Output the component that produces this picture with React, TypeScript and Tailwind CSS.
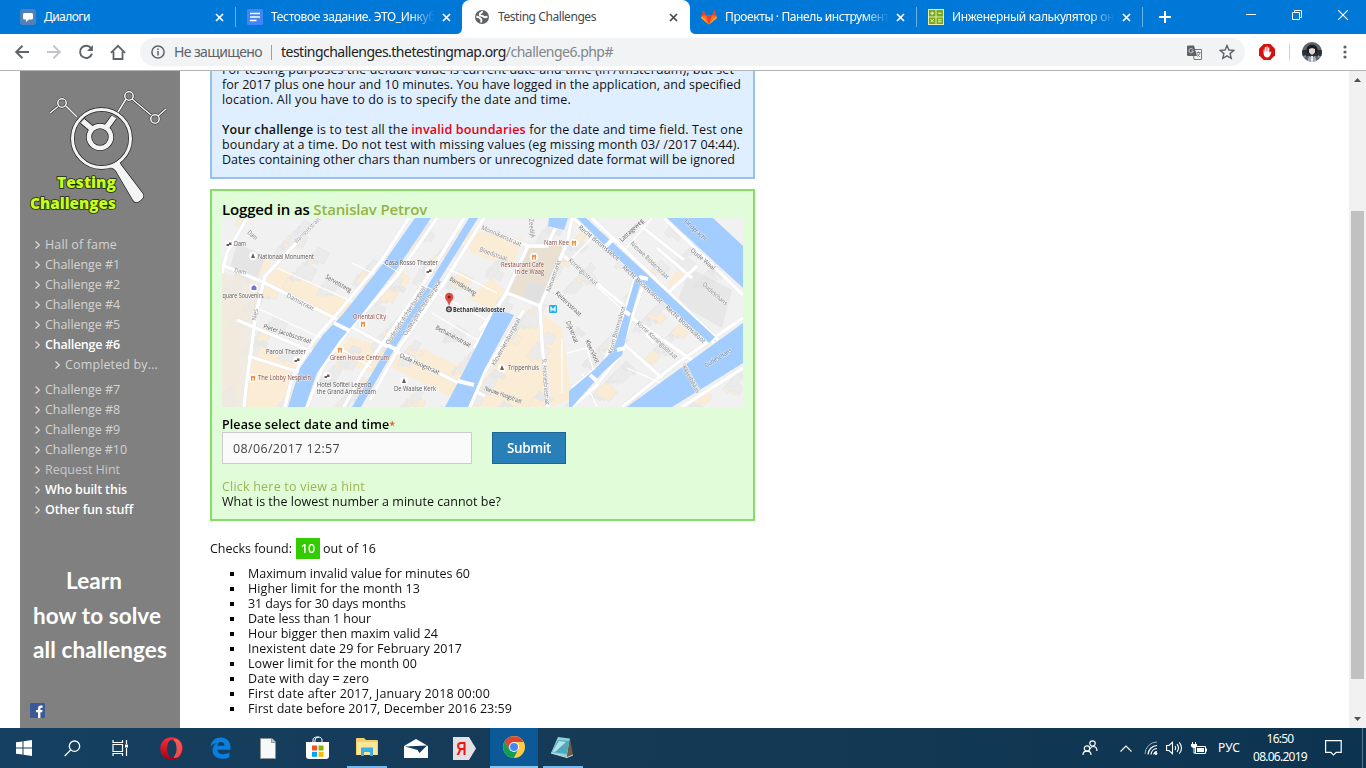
import { useLayoutEffect, useRef, type ReactNode } from "react";

/* A single line of text whose tracking is measured so that it spans the given width. */
function Fit({ w, className = "", children }: { w: number; className?: string; children: ReactNode }) {
  const ref = useRef<HTMLSpanElement>(null);
  useLayoutEffect(() => {
    const el = ref.current;
    if (!el) return;
    el.style.letterSpacing = "0px";
    const natural = el.getBoundingClientRect().width;
    const n = el.textContent?.length || 1;
    el.style.letterSpacing = `${(w - natural) / n}px`;
  }, [w]);
  return (
    <span ref={ref} className={"inline-block whitespace-pre " + className}>
      {children}
    </span>
  );
}

function Close({ className }: { className: string }) {
  return (
    <svg width="9" height="9" viewBox="0 0 9 9" className={className}>
      <path d="M1 1L8 8M8 1L1 8" stroke="currentColor" strokeWidth="1.7" />
    </svg>
  );
}

function TabStrip() {
  return (
    <div className="flex h-[34px] bg-[#0078d7] text-[12px] text-white">
      <div className="flex h-full w-[235px] items-center pl-5">
        <svg width="16" height="16" viewBox="0 0 16 16">
          <rect width="16" height="16" rx="3" fill="#5181b8" />
          <path d="M4.500 4h7Q13 4 13 5.500v3.500q0 1.500-1.500 1.500H9l-3 2.500V10.500H4.500Q3 10.500 3 9V5.500Q3 4 4.500 4z" fill="#fff" />
        </svg>
        <Fit w={46} className="ml-2">Диалоги</Fit>
        <Close className="ml-auto mr-[11px]" />
      </div>
      <div className="mt-[7px] h-5 w-px bg-[#6cb0e8]" />
      <div className="flex h-full w-[226px] items-center pl-[11px]">
        <svg width="16" height="16" viewBox="0 0 16 16">
          <rect width="16" height="16" rx="1.500" fill="#4285f4" />
          <path d="M3 4.500h10M3 8h10M3 11.500h6.500" stroke="#fff" strokeWidth="1.700" />
        </svg>
        <div className="ml-2 w-[164px] overflow-hidden whitespace-nowrap [mask-image:linear-gradient(to_right,black_85%,transparent)]">
          <Fit w={164}>Тестовое задание. ЭТО_Инкуб</Fit>
        </div>
        <Close className="ml-auto mr-[11px]" />
      </div>
      <div className="relative flex h-full w-[228px] items-center rounded-t-[8px] bg-white pl-3 text-[#45494d]">
        <svg className="absolute -left-[6px] bottom-0" width="6" height="6"><path d="M6 0v6H0Q6 6 6 0" fill="#fff" /></svg>
        <svg className="absolute -right-[6px] bottom-0" width="6" height="6"><path d="M0 0v6h6Q0 6 0 0" fill="#fff" /></svg>
        <svg width="16" height="16" viewBox="0 0 16 16">
          <circle cx="8" cy="8" r="7" fill="#5f6368" />
          <path d="M8.800 2.300C7.500 2.800 8.200 3.700 7 4 5.600 4.400 5.500 5.500 6 6.400 6.800 7.200 8.800 6.600 9.600 7.600 10.300 8.500 11.500 8.400 13.500 7.700M2.300 7.500L5 8.300 7.200 10.200C7.900 11.200 7 12.200 7.100 13.500" fill="none" stroke="#fff" strokeWidth="1.900" />
        </svg>
        <Fit w={98} className="ml-2">Testing Challenges</Fit>
        <Close className="ml-auto mr-3" />
      </div>
      <div className="flex h-full w-[226px] items-center pl-[10px]">
        <svg width="18" height="16" viewBox="0 0 18 16">
          <path d="M3.500 1L6 6.500H12L14.500 1 17 9 9 15.500 1 9z" fill="#fc6d26" />
          <path d="M3.500 1L6 6.500H1.700zM14.500 1L12 6.500h4.300zM6 6.500h6L9 15.500z" fill="#e24329" />
          <path d="M1.700 7.500L1 9l8 6.500-4.500-6zM16.300 7.500L17 9l-8 6.500 4.500-6z" fill="#fca326" />
        </svg>
        <div className="ml-[7px] w-[164px] overflow-hidden [mask-image:linear-gradient(to_right,black_85%,transparent)]">
          <Fit w={164}>Проекты · Панель инструмент</Fit>
        </div>
        <Close className="ml-auto mr-[11px]" />
      </div>
      <div className="mt-[7px] h-5 w-px bg-[#6cb0e8]" />
      <div className="flex h-full w-[225px] items-center pl-[11px]">
        <svg width="16" height="16" viewBox="0 0 16 16">
          <rect width="16" height="16" fill="#e5efb4" />
          <path d="M1 1h6.500v6.500H1zM8.500 1H15v6.500H8.500zM1 8.500h6.500V15H1zM8.500 8.500H15V15H8.500z" fill="#79a81a" />
          <path d="M2.500 4.200h3.500M4.200 2.500v3.500M10 4.200h3.500M2.700 10.200l3 3M5.700 10.200l-3 3M10 10.800h3.500M10 12.800h3.500" stroke="#f1f6cf" />
        </svg>
        <div className="ml-2 w-[162px] overflow-hidden [mask-image:linear-gradient(to_right,black_85%,transparent)]">
          <Fit w={162}>Инженерный калькулятор он</Fit>
        </div>
        <Close className="ml-auto mr-[11px]" />
      </div>
      <div className="mt-[7px] h-5 w-px bg-[#6cb0e8]" />
      <div className="flex h-full w-[44px] items-center justify-center">
        <svg width="12" height="12"><path d="M0 6h12M6 0v12" stroke="#fff" strokeWidth="2" /></svg>
      </div>
      <div className="ml-auto flex h-[29px] w-[138px] items-center">
        <div className="flex w-[46px] justify-center"><svg width="10" height="10"><path d="M0 4.500h10" stroke="#fff" /></svg></div>
        <div className="flex w-[46px] justify-center">
          <svg width="10" height="10" fill="none" stroke="#fff"><path d="M.5 2.500h7v7h-7zM2.500 2.500v-2h7v7h-2" /></svg>
        </div>
        <div className="flex w-[46px] justify-center"><svg width="10" height="10"><path d="M0 0l10 10M10 0L0 10" stroke="#fff" strokeWidth="1.100" /></svg></div>
      </div>
    </div>
  );
}

function Toolbar() {
  return (
    <div className="flex h-[37px] items-center border-b border-[#b3b3b3] bg-white pl-[14px] text-[#5f6368]">
      <svg width="16" height="16" viewBox="0 0 16 16" fill="none" stroke="#5f6368" strokeWidth="1.900"><path d="M15 8H2.500M8.500 1.800L2.200 8l6.300 6.200" /></svg>
      <svg className="ml-4" width="16" height="16" viewBox="0 0 16 16" fill="none" stroke="#c2c4c7" strokeWidth="1.900"><path d="M1 8h12.500M7.500 1.800L13.800 8l-6.300 6.200" /></svg>
      <svg className="ml-4" width="16" height="16" viewBox="0 0 16 16"><path d="M13.400 4.700A6.100 6.100 0 1 0 14 9.600" fill="none" stroke="#5f6368" strokeWidth="1.900" /><path d="M14.900 1v6H9z" fill="#5f6368" /></svg>
      <svg className="ml-4" width="16" height="16" viewBox="0 0 16 16" fill="none" stroke="#5f6368" strokeWidth="1.800"><path d="M.9 8.800L8 1.800l7.100 7M3.500 7.500V15h9V7.500" /></svg>
      <div className="ml-[14px] flex h-7 w-[1105px] items-center rounded-full bg-[#f1f3f4] pl-[11px]">
        <svg width="14" height="14" viewBox="0 0 14 14"><circle cx="7" cy="7" r="6.100" fill="none" stroke="#5f6368" strokeWidth="1.500" /><path d="M7 6v4.500M7 3.400v1.500" stroke="#5f6368" strokeWidth="1.500" /></svg>
        <Fit w={88} className="-mt-px ml-[9px] text-[14px]">Не защищено</Fit>
        <div className="ml-[9px] h-[15px] w-px bg-[#9aa0a6]" />
        <Fit w={332} className="-mt-px ml-[9px] text-[14px] text-[#80868b]"><span className="text-[#202124]">testingchallenges.thetestingmap.org</span>/challenge6.php#</Fit>
        <svg className="ml-auto" width="15" height="15" viewBox="0 0 15 15">
          <path d="M6 4.500h8.500v10H7z" fill="#f1f3f4" stroke="#777b80" />
          <path d="M0 1.500Q0 .5 1 .5h6l3 10.500H1q-1 0-1-1z" fill="#5f6368" />
          <path d="M6 4.500A2.200 2.200 0 1 0 6.300 6H4.500" fill="none" stroke="#d5d7da" strokeWidth=".9" />
          <path d="M9.500 7.500h4M11.500 6.500v1M13 7.500c-.5 2-1.500 3-3 4M10.500 8.500c.5 1.500 1.300 2.500 2.500 3.500" fill="none" stroke="#777b80" strokeWidth=".9" />
        </svg>
        <svg className="ml-[17px] mr-[10px]" width="16" height="16" viewBox="0 0 16 16"><path d="M8 1.500l1.900 4.500 4.900.4-3.700 3.200 1.100 4.800L8 11.900l-4.200 2.500 1.100-4.800L1.200 6.400 6.100 6z" fill="none" stroke="#5f6368" strokeWidth="1.400" /></svg>
      </div>
      <svg className="ml-[14px]" width="16" height="16" viewBox="0 0 16 16">
        <path d="M4.700 0h6.600L16 4.700v6.600L11.300 16H4.700L0 11.300V4.700z" fill="#d81010" />
        <path d="M4.600 5.500v4.200q.5 3.800 3.600 3.800 2 0 3-2.300l1.200-3.300-1.100-.3-1 1.500V3.500H9.100v4h-.4V2.500H7.400v5H7V3.300H5.800v4.500h-.4V5.500z" fill="#fff" />
      </svg>
      <div className="ml-[14px] h-4 w-px bg-[#cfd1d4]" />
      <svg className="ml-3" width="20" height="20" viewBox="0 0 20 20">
        <defs><clipPath id="avatar"><circle cx="10" cy="10" r="10" /></clipPath></defs>
        <g clipPath="url(#avatar)">
          <path d="M0 0h20v20H0z" fill="#5d646c" /><path d="M0 8h20v6H0z" fill="#2b3036" />
          <path d="M4.500 8c0-7 11-7 11 0l-1 3h-9z" fill="#191b20" />
          <path d="M7 7l3-1 3 1v3.500L10 13l-3-2.500z" fill="#e7d8cf" />
          <path d="M5 20l2-6 3 2 3-2 2 6z" fill="#a2abbd" /><path d="M9 14h2v6H9z" fill="#e4e7ee" />
          <path d="M1 14l3-1-1 3zM16 13l3 2-3 1z" fill="#8b939d" />
        </g>
      </svg>
      <svg className="ml-[21px]" width="4" height="14" fill="#5f6368"><circle cx="2" cy="2" r="1.600" /><circle cx="2" cy="7" r="1.600" /><circle cx="2" cy="12" r="1.600" /></svg>
    </div>
  );
}

const menu: { t: string; w: number; c: string; row: string }[] = [
  { t: "Hall of fame", w: 72, c: "text-[#d3d3d3]", row: "h-5" },
  { t: "Challenge #1", w: 75, c: "text-[#d3d3d3]", row: "h-5" },
  { t: "Challenge #2", w: 75, c: "text-[#d3d3d3]", row: "h-5" },
  { t: "Challenge #4", w: 75, c: "text-[#d3d3d3]", row: "h-5" },
  { t: "Challenge #5", w: 75, c: "text-[#d3d3d3]", row: "h-5" },
  { t: "Challenge #6", w: 75, c: "text-white font-semibold", row: "h-5" },
  { t: "Completed by...", w: 93, c: "text-[#d3d3d3]", row: "h-5 pl-5 mb-[5px]" },
  { t: "Challenge #7", w: 75, c: "text-[#d3d3d3]", row: "h-5" },
  { t: "Challenge #8", w: 75, c: "text-[#d3d3d3]", row: "h-5" },
  { t: "Challenge #9", w: 75, c: "text-[#d3d3d3]", row: "h-5" },
  { t: "Challenge #10", w: 82, c: "text-[#d3d3d3]", row: "h-5" },
  { t: "Request Hint", w: 75, c: "text-[#c8c8c8]", row: "h-5" },
  { t: "Who built this", w: 82, c: "text-white font-semibold", row: "h-5" },
  { t: "Other fun stuff", w: 88, c: "text-white font-semibold", row: "h-5" },
];

function Logo() {
  return (
    <svg width="160" height="164" viewBox="0 0 160 164">
      {[
        { s: "#222", o: 1.4 },
        { s: "#f4f4f4", o: 0 },
      ].map(({ s, o }) => (
        <g key={s} fill="none" stroke={s}>
          <g strokeWidth={1.6 + o * 0.6}>
            <path d="M30 42L38 35.500M46 35L57 46M98 41L106 28M112 28L131 44M138 45L146 38" />
            <circle cx="42" cy="32" r="4.200" /><circle cx="109" cy="25" r="4.200" /><circle cx="135" cy="48" r="4.200" />
          </g>
          <circle cx="81.500" cy="67.500" r="29" strokeWidth={3 + o} />
          <circle cx="80" cy="66" r="11" strokeWidth={4.500 + o} />
          <path d="M72 58L62.500 50M86 57L94 46" strokeWidth={5.500 + o} />
          <path d="M89 96L98 90Q100 91 101 94L123 123Q125 127 118 131 115 132 113 129L96 100Q94 97 89 96Z" fill={s} strokeWidth={o} />
        </g>
      ))}
      <g fontFamily="'Open Sans', sans-serif" fontWeight="800" fontSize="15" fill="#c5ff1c" stroke="#202810" strokeWidth="1.600" paintOrder="stroke">
        <text x="37" y="116.500" textLength="59" lengthAdjust="spacingAndGlyphs">Testing</text>
        <text x="10" y="137.500" textLength="86" lengthAdjust="spacingAndGlyphs">Challenges</text>
      </g>
    </svg>
  );
}

function Sidebar() {
  return (
    <aside className="ml-5 flex h-full w-40 shrink-0 flex-col bg-[#808080]">
      <Logo />
      <ul className="text-[12.5px] leading-5 [font-family:'Open_Sans',sans-serif]">
        {menu.map((m) => (
          <li key={m.t} className={"flex items-center " + m.row}>
            <svg className="ml-[15px] mr-[5px]" width="5" height="8"><path d="M.5.500L4.500 4L.5 7.500" fill="none" stroke="#e0e0e0" strokeWidth="1.200" /></svg>
            <Fit w={m.w} className={m.c}>{m.t}</Fit>
          </li>
        ))}
      </ul>
      <div className="mt-11 flex flex-col text-[22.5px] font-bold leading-[34.500px] text-white [font-family:Lato,sans-serif]">
        <div className="pl-[46px]"><Fit w={56}>Learn</Fit></div>
        <div className="pl-[13px]"><Fit w={128}>how to solve</Fit></div>
        <div className="pl-[13px]"><Fit w={134}>all challenges</Fit></div>
      </div>
      <svg className="mb-[10px] ml-[10px] mt-auto" width="15" height="15" viewBox="0 0 15 15">
        <rect width="15" height="15" rx="1" fill="#3b5998" />
        <path d="M8 15V9.300H6V7h2V5.400Q8 2.500 10.800 2.500h1.800v2.200h-1.200q-1 0-1 1V7h2.200l-.4 2.300h-1.800V15z" fill="#fff" />
      </svg>
    </aside>
  );
}

const streets = [
  "M25 0L5 35 0 55", "M0 47L43 65 128 108 168 130 246 170 263 178", "M98 0L43 58 34 95 24 170 22 189", "M187 0L160 42 116 95 92 122 70 160 63 189",
  "M215 0L175 58 128 110 100 150 85 189", "M242 0L205 60 170 112 140 155 122 189", "M262 0L220 68 178 128 148 182", "M338 0L325 28 306 28 284 75 252 130",
  "M350 0L345 25 318 88 285 75 258 112", "M318 88L320 125 326 189", "M302 92L262 155 248 189", "M306 28L258 8", "M351 0L405 48 460 92 492 125",
  "M370 0L430 58 496 122", "M342 38L400 86 432 125", "M423 62L408 105 396 140 374 168 350 189", "M413 60L400 105 382 144 350 170", "M442 0L521 77",
  "M521 100L455 145 400 189", "M521 150L460 189", "M475 48L446 75M415 5L462 42M435 30L470 60", "M395 120L440 160M410 100L474 145", "M15 102L93 135M26 138L80 155",
];
const houses = Array.from({ length: 250 }, (_, i) => {
  const a = (i * 83 + 17) % 537;
  const b = (i * 47 + (i % 7) * 19) % 199;
  return { x: a, y: b, w: 7 + (i % 4) * 3, h: 5 + (i % 3) * 4, f: i % 5 === 0 ? "#faebd4" : i % 3 === 0 ? "#e7e8ea" : "#ebebec", r: a > 340 ? 43 : 28 };
});
const labels: { t: string; x: number; y: number; w: number; r?: number; c?: string }[] = [
  { t: "Dam", x: 12, y: 28, w: 12 }, { t: "Dam", x: 25, y: 15, w: 11, r: 43, c: "#777" }, { t: "Dam", x: 12, y: 54, w: 12, r: 13, c: "#888" },
  { t: "Nationaal Monument", x: 36, y: 41, w: 56 }, { t: "quare Souvenirs", x: 0.5, y: 80, w: 41 },
  { t: "Warmoesstraat", x: 75, y: 26, w: 34, r: -46, c: "#999" }, { t: "Servetsteeg", x: 103, y: 60, w: 29, r: 30 },
  { t: "Damstraat", x: 64, y: 79, w: 30, r: 27, c: "#888" }, { t: "Casa Rosso Theater", x: 163, y: 47, w: 53 },
  { t: "Oriental City", x: 131, y: 101, w: 33, c: "#8c4b42" }, { t: "Pieter Jacobszstraat", x: 41, y: 110, w: 50, r: 18 },
  { t: "Parool Theater", x: 44, y: 136, w: 40 }, { t: "Green House Centrum", x: 108, y: 142, w: 59, c: "#8c4b42" },
  { t: "The Lobby Nesplein", x: 36, y: 162, w: 53, c: "#8c4b42" }, { t: "Hotel Sofitel Legend", x: 95, y: 169, w: 54 },
  { t: "the Grand Amsterdam", x: 95, y: 176, w: 59 }, { t: "De Waalse Kerk", x: 172, y: 173, w: 42 },
  { t: "Oude Hoogstraat", x: 177, y: 139, w: 43, r: 24 }, { t: "Bethaniënstraat", x: 213, y: 111, w: 39, r: 28 },
  { t: "Barndesteeg", x: 227, y: 62, w: 30, r: 31 }, { t: "Oudezijds Achterburgwal", x: 167, y: 127, w: 68, r: -57, c: "#888" },
  { t: "Oudezijds Achterburgwal", x: 184, y: 118, w: 65, r: -57, c: "#888" },
  { t: "Monnikenstraat", x: 259, y: 11, w: 43, r: 24, c: "#888" }, { t: "Bloedstraat", x: 257, y: 33, w: 29, r: 20, c: "#888" },
  { t: "Nam Kee", x: 322, y: 27, w: 25, c: "#8c4b42" }, { t: "Restaurant Café", x: 279, y: 49, w: 43, c: "#8c4b42" }, { t: "in de Waag", x: 293, y: 56, w: 29, c: "#8c4b42" },
  { t: "Nieuwmarkt", x: 328, y: 74, w: 33, r: -70, c: "#888" }, { t: "Koningsstraat", x: 346, y: 43, w: 37, r: 42, c: "#888" },
  { t: "Recht Boomssloot", x: 356, y: 10, w: 51, r: 40, c: "#777" }, { t: "Recht Boomssloot", x: 400, y: 50, w: 52, r: 43, c: "#777" }, { t: "Recht Boomssloot", x: 443, y: 90, w: 52, r: 43, c: "#777" },
  { t: "Keizersstraat", x: 333, y: 76, w: 33, r: 43 }, { t: "Dijkstraat", x: 344, y: 104, w: 23, r: 68 }, { t: "Kleersloot", x: 363, y: 123, w: 25, r: 64 },
  { t: "Krom Boomssloot", x: 390, y: 136, w: 49, r: -74, c: "#888" }, { t: "Korte Koningsstraat", x: 414, y: 106, w: 53, r: 42, c: "#888" },
  { t: "Lastageweg", x: 400, y: 24, w: 30, r: -43 }, { t: "Nieuwe Ridderstraat", x: 408, y: 26, w: 51, r: 44, c: "#888" },
  { t: "Oude Waal", x: 468, y: 33, w: 30, r: 40, c: "#777" }, { t: "Oudeschans", x: 480, y: 67, w: 31, r: 42, c: "#888" }, { t: "Oudeschans", x: 484, y: 150, w: 31, r: -32, c: "#5277a2" },
  { t: "landgracht", x: 462, y: 4, w: 28, r: 43, c: "#5277a2" }, { t: "Trippenhuis", x: 286, y: 152, w: 31 }, { t: "Nieuwe Hoogstraat", x: 262, y: 172, w: 39, r: 20 },
  { t: "Kloveniersburgwal", x: 273, y: 148, w: 53, r: -61, c: "#888" }, { t: "St. Antoniesbreestraat", x: 320, y: 141, w: 46, r: 86, c: "#888" },
  { t: "Nes", x: 34, y: 103, w: 12, r: -80, c: "#888" }, { t: "Kikkerbilsluis", x: 460, y: 149, w: 30, r: 61, c: "#888" }, { t: "Zeedijk", x: 307, y: 1, w: 19, r: 85, c: "#888" },
];

function AreaMap() {
  return (
    <svg width="521" height="189" viewBox="0 0 521 189" className="block">
      <rect width="521" height="189" fill="#f1f1f1" />
      <g className="blur-[0.35px]">
        <g fill="#fbecd5">
          <path d="M43 62L55 48 140 90 118 108zM25 35L50 45 35 62 10 50zM35 125L75 145 62 189 20 189zM128 118L165 132 150 155 110 140zM172 133L260 176 250 189 150 140zM0 60L20 65 18 189 0 189z" />
          <path d="M270 60L285 75 270 92 245 80zM302 92L315 95 326 189 250 189 270 150zM320 95L340 110 350 180 330 189zM462 42L475 48 448 75 446 65zM230 10L300 20 290 50 250 35z" />
          <path d="M200 130L250 155 240 175 190 148zM165 45L190 60 175 78 160 60z" />
        </g>
        {houses.map((h, i) => (
          <path key={i} transform={`translate(${h.x} ${h.y}) rotate(${h.r})`} d={`M0 0H${h.w}V${h.h}H${h.w / 2}V${h.h + 3}H0Z`} fill={h.f} stroke="#dfdfe0" strokeWidth=".35" />
        ))}
        <path d="M0 55L40 65 34 90 24 160 22 189H0V85z" fill="#efe9df" opacity=".75" />
        <path d="M308 28H340L338 45 318 88 284 75z" fill="#e9e0d2" />
        <path d="M306 64L330 68 318 88 300 82z" fill="#e0e0e1" />
        <path d="M15 25L43 38 35 63 7 53z" fill="#e5e5e5" />
        <path d="M468 50L510 72 500 110 455 85z" fill="#e3e3e4" opacity=".7" />
        <g fill="none" stroke="#e4e4e4" strokeWidth="4.300">{streets.map((d) => <path key={d} d={d} />)}</g>
        <g fill="none" stroke="#fff" strokeWidth="3.400">{streets.map((d) => <path key={d} d={d} />)}</g>
        <g fill="none" stroke="#fff" strokeWidth="1.200"><path d="M55 50L145 90M35 90L110 125M130 45L170 65M215 75L270 105M210 95L260 125M225 50L275 75M110 125L150 150M345 40L420 110M380 10L350 40M430 0L400 35M345 135L365 130 375 165M340 120V175M360 155L375 189M405 150L450 170" /></g>
        <g fill="#a3ccff">
          <path d="M193 0H209L174 52 137 100 118 122 95 155 83 189H66L78 150 101 117 121 96 160 47z" />
          <path d="M247 0H256L213 69 176 125 139 189H130L168 125 205 69z" />
          <path d="M273 91L292 97 263 150 246 189H223L241 155z" />
          <path d="M327 0H346L342 12 326 8z" />
          <path d="M355 0L364 0 426 57 493 119 487 125 418 62 384 29z" />
          <path d="M413 61L419 63 409 98 400 137 381 154 350 189H347V173L372 152 391 132 404 92z" />
          <path d="M445 0H491L521 28V70z" />
          <path d="M521 105V145L450 189H405z" />
        </g>
        <g stroke="#fff" strokeWidth="4" fill="none"><path d="M112 105L128 113M236 163L252 167M165 127L175 132M383 29L391 21M408 97L401 92M417 59L426 61M395 132L403 130M368 157L375 163" /><path d="M157 43L178 55M203 68L213 73" strokeWidth="1" /><path d="M462 145L477 173" stroke="#e3e3e3" strokeWidth="3" /></g>
      </g>
      <g fontFamily="'Open Sans', sans-serif" fontSize="6.300" stroke="#f7f7f7" strokeWidth="1.100" strokeOpacity=".75" paintOrder="stroke" className="blur-[0.2px]">
        {labels.map((l, i) => (
          <text key={i} transform={`translate(${l.x} ${l.y}) rotate(${l.r ?? 0})`} textLength={l.w} lengthAdjust="spacingAndGlyphs" fill={l.c ?? "#5a5654"}>{l.t}</text>
        ))}
        <text x="231" y="94" fontSize="6.500" fontWeight="700" textLength="52" lengthAdjust="spacingAndGlyphs" fill="#333">Bethaniënklooster</text>
      </g>
      <path d="M227 89C227 84 223 82 223 79a4.200 4.200 0 0 1 8.400 0C231.400 82 227.500 84 227 89z" fill="#df4e43" /><circle cx="227.200" cy="79" r="1.500" fill="#7b1e18" />
      <circle cx="227" cy="91.300" r="2.300" fill="#fff" stroke="#444" strokeWidth="1.500" /><circle cx="227" cy="91.300" r=".8" fill="#333" />
      <rect x="327" y="87" width="8" height="8" rx="1" fill="#22b0ed" /><path d="M329 93.500v-4l2 2.500 2-2.500v4" fill="none" stroke="#fff" strokeWidth="1.200" />
      {[[141, 106], [118, 132], [31, 160], [312, 39], [352, 25]].map(([x, y]) => (
        <g key={x}><circle cx={x} cy={y} r="4.200" fill="#fff" /><path d={`M${x - 1.300} ${y - 2.300}v5M${x + 1.300} ${y - 2.300}v5M${x - 2.200} ${y - 1}h4.400`} stroke="#ef8a3a" strokeWidth="1.300" /></g>
      ))}
      {[[31, 38], [182, 163], [280, 150]].map(([x, y]) => (
        <g key={x}><circle cx={x} cy={y} r="4" fill="#fff" opacity=".9" /><path d={`M${x - 2} ${y + 2}L${x} ${y - 3}L${x + 2} ${y + 2}Z`} fill="#6f5a56" /></g>
      ))}
      {[[207, 53], [75, 142], [105, 158], [7, 26]].map(([x, y]) => (
        <g key={x}><circle cx={x} cy={y} r="4" fill="#fff" opacity=".9" /><path d={`M${x - 2.500} ${y}h2.500v2h-2.500zM${x} ${y - 1.500}h2.500v2.500h-2.500z`} fill="#6f5a56" /></g>
      ))}
      <circle cx="32" cy="70" r="4" fill="#fff" /><path d="M29.500 72v-3l2.500-2 2.500 2v3z" fill="#6b78d0" />
    </svg>
  );
}

const checks: [string, number][] = [
  ["Maximum invalid value for minutes 60", 222], ["Higher limit for the month 13", 172], ["31 days for 30 days months", 158], ["Date less than 1 hour", 123],
  ["Hour bigger then maxim valid 24", 190], ["Inexistent date 29 for February 2017", 214], ["Lower limit for the month 00", 169], ["Date with day = zero", 121],
  ["First date after 2017, January 2018 00:00", 242], ["First date before 2017, December 2016 23:59", 264],
];

function Content() {
  return (
    <main className="ml-[30px] flex w-[545px] flex-col text-[12.5px] leading-[15px] text-[#111] [font-family:'Open_Sans',sans-serif]">
      <section className="-mt-[9px] flex h-[117px] shrink-0 flex-col items-start border-x-2 border-b-2 border-[#97c1ea] bg-[#e0efff] px-[10px]">
        <Fit w={512}>For testing purposes the default value is current date and time (in Amsterdam), but set</Fit>
        <Fit w={519}>for 2017 plus one hour and 10 minutes. You have logged in the application, and specified</Fit>
        <Fit w={349} className="mb-[15px]">location. All you have to do is to specify the date and time.</Fit>
        <Fit w={521}><b className="font-semibold">Your challenge</b> is to test all the <b className="font-semibold text-[#e6000f]">invalid boundaries</b> for the date and time field. Test one</Fit>
        <Fit w={518}>boundary at a time. Do not test with missing values (eg missing month 03/ /2017 04:44).</Fit>
        <Fit w={513}>Dates containing other chars than numbers or unrecognized date format will be ignored</Fit>
      </section>
      <section className="mt-[10px] flex h-[332px] shrink-0 flex-col border-2 border-[#86dd68] bg-[#e1fcd8] px-[10px] pt-[9px]">
        <div className="h-[18px] text-[15px] font-semibold leading-[19px] text-black"><Fit w={205}>Logged in as <span className="text-[#96b04a]">Stanislav Petrov</span></Fit></div>
        <AreaMap />
        <div className="mt-[10px] h-[15px] font-semibold text-black"><Fit w={173}>Please select date and time<span className="text-[10px] leading-3 text-[#e05030]">*</span></Fit></div>
        <div className="flex h-8 shrink-0 gap-5">
          <div className="flex w-[250px] items-center border border-[#ccc] bg-[#fafafa] pl-[10px] text-[#444]"><Fit w={107}>08/06/2017 12:57</Fit></div>
          <button className="flex w-[74px] items-center justify-center border border-[#1f6494] bg-[#2980b9] text-[13.500px] font-semibold text-white"><Fit w={44}>Submit</Fit></button>
        </div>
        <div className="mt-[15px] flex flex-col items-start">
          <Fit w={143} className="text-[#9bb553]">Click here to view a hint</Fit>
          <Fit w={279}>What is the lowest number a minute cannot be?</Fit>
        </div>
      </section>
      <div className="mt-[17px] flex h-[21px] shrink-0 items-center">
        <Fit w={82}>Checks found:</Fit>
        <span className="ml-1 flex h-[21px] w-6 items-center justify-center bg-[#33cc00] font-semibold text-white">10</span>
        <Fit w={53} className="ml-[3px]">out of 16</Fit>
      </div>
      <ul className="mt-[7px] pl-5">
        {checks.map(([t, w]) => (
          <li key={t} className="flex h-[15px] items-center"><span className="mr-[14px] size-1 bg-black" /><Fit w={w}>{t}</Fit></li>
        ))}
      </ul>
    </main>
  );
}

function Scrollbar() {
  return (
    <div className="ml-auto flex w-[17px] flex-col items-center bg-[#f1f1f1]">
      <svg width="17" height="17"><path d="M5 11l3.500-4 3.500 4z" fill="#505050" /></svg>
      <div className="mt-[123px] h-[468px] w-[13px] bg-[#c1c1c1]" />
      <svg className="mt-auto" width="17" height="17"><path d="M5 6l3.500 4L12 6z" fill="#505050" /></svg>
    </div>
  );
}

function Slot({ w, children, on = "" }: { w: string; children: ReactNode; on?: string }) {
  return <div className={"flex h-10 shrink-0 items-center justify-center " + w + " " + on}>{children}</div>;
}

function Taskbar() {
  return (
    <footer className="flex h-10 bg-[linear-gradient(to_right,#154061,#153a56_45%,#0c3450)] text-white">
      <Slot w="w-12">
        <svg width="16" height="16" fill="#fff"><path d="M0 2.300L6.500 1.400V7.500H0zM7.500 1.200L16 0V7.500H7.500zM0 8.500H6.500V14.600L0 13.700zM7.500 8.500H16V16L7.500 14.800z" /></svg>
      </Slot>
      <Slot w="w-12">
        <svg width="17" height="17" fill="none" stroke="#fff" strokeWidth="1.300"><circle cx="10.500" cy="6.200" r="5.200" /><path d="M6.800 9.900L.7 16" /></svg>
      </Slot>
      <Slot w="w-12">
        <svg width="17" height="16" fill="none" stroke="#fff"><path d="M1 0v2.500h9.500V0M1 4.500h9.500v7H1zM1 16v-2.500h9.500V16M14.500 0v4M14.500 8v8" strokeWidth="1.200" /><path d="M13 4.500h3v3h-3z" fill="#fff" stroke="none" /></svg>
      </Slot>
      <Slot w="w-[54px]">
        <svg width="23" height="23" viewBox="0 0 23 23"><defs><linearGradient id="op" x2="0" y2="1"><stop stopColor="#fb2d39" /><stop offset="1" stopColor="#a70014" /></linearGradient></defs><circle cx="11.500" cy="11.500" r="11.200" fill="url(#op)" /><path d="M14 2C20 1 22 7 22 11.500S19 22 14 21z" fill="#ff6b68" opacity=".7" /><ellipse cx="11.800" cy="11.500" rx="4.800" ry="8.700" fill="#153e5d" /></svg>
      </Slot>
      <Slot w="w-11">
        <svg width="21" height="22" viewBox="0 0 21 22"><path d="M.5 9.500C1.500 3.500 5.500.5 10.700.5 17 .5 20.500 4.800 20.500 10.500v2.300H7.300c.2 3.200 3.100 4.500 6 4.500 2.300 0 4.200-.6 6-1.700v4.600c-2 1.100-4.400 1.600-7 1.600C6 21.800 2.500 18 2.500 13.300c0-3.200 1.700-5.900 4.700-7.600C4.700 6 2.200 7.500.5 9.500zm7-.7h6.900c0-2.300-1-3.900-3.500-3.900-2 0-3.200 1.700-3.400 3.900z" fill="#0a7fe0" /></svg>
      </Slot>
      <Slot w="w-[52px]"><svg width="16" height="21"><path d="M.5.500H12L15.500 4V20.500H.5z" fill="#f7f8f8" stroke="#8d9499" /><path d="M11.500.5V4.500h4" fill="#c7cccf" stroke="#777" strokeWidth=".7" /></svg></Slot>
      <Slot w="w-[46px]">
        <svg width="23" height="24" viewBox="0 0 23 24"><path d="M0 6h23v14q0 3-3 3H3q-3 0-3-3z" fill="#fff" /><path d="M7 7V4q0-3 4.500-3T16 4v3M9 6V4q0-3 4-3" fill="none" stroke="#fff" /><path d="M6 9.500h5v5H6z" fill="#f05022" /><path d="M12.500 9.500h5v5h-5z" fill="#7fba00" /><path d="M6 15.800h5v5H6z" fill="#00a4ef" /><path d="M12.500 15.800h5v5h-5z" fill="#ffb900" /></svg>
      </Slot>
      <div className="ml-[7px]" />
      <Slot w="w-10" on="border-b-2 border-[#76b9ed]">
        <svg width="22" height="20" viewBox="0 0 22 20"><path d="M0 2Q0 1 1 1h7l2 2h11q1 0 1 1v14H0z" fill="#f2cf67" /><path d="M1 5h20v13H1z" fill="#fbe69a" /><path d="M5 19v-8q0-.5.500-.5h11q.5 0 .5.500v8h-3v-4H8v4z" fill="#39b0e5" /></svg>
      </Slot>
      <Slot w="w-[58px]"><svg width="24" height="19"><path d="M0 7L12 0 24 7V19H0z" fill="#fff" /><path d="M1 7.500L23 6.500 15.500 14 13.500 11z" fill="#153b58" /></svg></Slot>
      <Slot w="w-[40px]"><svg className="-ml-px" width="23" height="23"><path d="M0 0H16L23 11.500 16 23H0z" fill="#e2e2e4" /><text x="8.500" y="18" textAnchor="middle" fontFamily="Liberation Sans, sans-serif" fontWeight="700" fontSize="18" textLength="10" lengthAdjust="spacingAndGlyphs" fill="#f01515">Я</text></svg></Slot>
      <div className="ml-[5px]" />
      <Slot w="w-12" on="border-b-2 border-[#8bc5ef] bg-[#0c5997]">
        <svg width="22" height="22" viewBox="0 0 22 22"><circle cx="11" cy="11" r="11" fill="#fc4" /><path d="M1.400 5.600A11 11 0 0 1 20.600 6H11L6.700 13.500z" fill="#db4437" /><path d="M1.500 5.500L6.700 13.500 11 16 15.300 13.500 10.800 22A11 11 0 0 1 1.500 5.500z" fill="#129d58" /><circle cx="11" cy="11" r="5" fill="#fff" /><circle cx="11" cy="11" r="4" fill="#4688f1" /></svg>
      </Slot>
      <div className="ml-[5px]" />
      <Slot w="w-10" on="border-b-2 border-[#76b9ed]">
        <svg className="-ml-[3px]" width="24" height="22" viewBox="0 0 24 22"><path d="M8 1L20 2.500 17 21.500 1 17z" fill="#8cd0dc" /><path d="M8 4L19.500 5 17 18 2 16z" fill="#4daabd" /><path d="M9 5L16 6 5 16 2.500 15.500z" fill="#b5e4e8" /><path d="M20 2.500L23 19 17 21.500z" fill="#715c43" /><path d="M1 17L17 21.500 23 19" fill="none" stroke="#d9e0e1" /></svg>
      </Slot>
      <div className="ml-auto flex items-center text-[12px] leading-[18px]">
        <svg width="16" height="16" fill="none" stroke="#fff" strokeWidth="1.200"><circle cx="10.500" cy="3.500" r="2.700" /><path d="M8 9q1-2.500 3-2.500Q15 6.500 15 11" /><circle cx="5" cy="8.500" r="2.700" /><path d="M1 15q0-3.800 4-3.800T9 15" /></svg>
        <svg className="ml-[22px]" width="12" height="7" fill="none" stroke="#fff" strokeWidth="1.200"><path d="M.5 6.500L6 1l5.500 5.500" /></svg>
        <svg className="ml-3" width="14" height="14" fill="none" stroke="#fff"><path d="M1 13A12 12 0 0 1 13 1" stroke="#9ab0be" /><path d="M4 13.500A9.500 9.500 0 0 1 13 4.500M7 13.500A6.500 6.500 0 0 1 13 7.500M9.800 13.500A3.500 3.500 0 0 1 13 10.500" strokeWidth="1.200" /><circle cx="12" cy="12.500" r="1" fill="#fff" /></svg>
        <svg className="ml-2" width="17" height="14" fill="none" stroke="#fff" strokeWidth="1.100"><path d="M.6 4.500H3L6.500 1.300v11.400L3 9.500H.6zM9 5q1.300 2 0 4M11 3.200q3 3.800 0 7.600M13.300 1.300q4.400 5.700 0 11.400" /></svg>
        <svg className="ml-2" width="16" height="13"><path d="M4.500 4.500h10v7h-10z" fill="none" stroke="#fff" /><path d="M6 6h7v4H6zM15 6.500h1v3h-1zM0 2h6v2.500L4 6H2L0 4.500zM1 0h1v2H1zM4 0h1v2H4zM2.500 6h1v4.500h1v1h-2z" fill="#fff" /></svg>
        <Fit w={22} className="ml-[11px]">РУС</Fit>
        <div className="ml-[13px] flex w-[54px] flex-col items-center"><Fit w={27}>16:50</Fit><Fit w={54}>08.06.2019</Fit></div>
        <svg className="ml-[18px]" width="17" height="16" fill="none" stroke="#fff" strokeWidth="1.200"><path d="M.6.600h15.600v11.800h-5L8.500 15l-2.700-2.600H.6z" /></svg>
        <div className="ml-5 mr-[3px] h-10 w-px bg-[#56758a]" />
      </div>
    </footer>
  );
}

export default function App() {
  return (
    <div className="flex h-[768px] w-[1366px] flex-col overflow-hidden bg-white [font-family:'Noto_Sans','Open_Sans',sans-serif]">
      <TabStrip />
      <Toolbar />
      <div className="flex h-[657px] shrink-0 overflow-hidden">
        <Sidebar />
        <Content />
        <Scrollbar />
      </div>
      <Taskbar />
    </div>
  );
}
